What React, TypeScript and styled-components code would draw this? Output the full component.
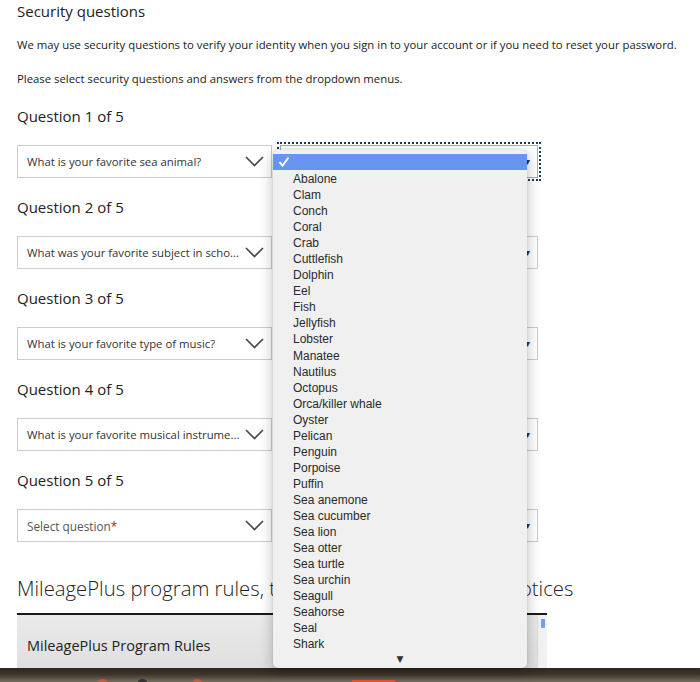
import { createGlobalStyle, styled } from 'styled-components'

const questions = [
	{ label: 'Question 1 of 5', value: 'What is your favorite sea animal?', focused: true },
	{ label: 'Question 2 of 5', value: 'What was your favorite subject in scho...' },
	{ label: 'Question 3 of 5', value: 'What is your favorite type of music?' },
	{ label: 'Question 4 of 5', value: 'What is your favorite musical instrume...' },
	{ label: 'Question 5 of 5', value: '', focused: false },
]

const animals = [
	'Abalone',
	'Clam',
	'Conch',
	'Coral',
	'Crab',
	'Cuttlefish',
	'Dolphin',
	'Eel',
	'Fish',
	'Jellyfish',
	'Lobster',
	'Manatee',
	'Nautilus',
	'Octopus',
	'Orca/killer whale',
	'Oyster',
	'Pelican',
	'Penguin',
	'Porpoise',
	'Puffin',
	'Sea anemone',
	'Sea cucumber',
	'Sea lion',
	'Sea otter',
	'Sea turtle',
	'Sea urchin',
	'Seagull',
	'Seahorse',
	'Seal',
	'Shark',
]

const Chevron = () => (
	<svg width="19" height="11" viewBox="0 0 19 11">
		<polyline points="1,1 9.5,9.5 18,1" fill="none" stroke="#4a4a4a" strokeWidth="1.7" />
	</svg>
)

const CheckMark = () => (
	<svg width="10" height="10" viewBox="0 0 10 10">
		<path d="M1 5.6 L3.6 8.6 L9 1.2" fill="none" stroke="#fff" strokeWidth="1.9" strokeLinecap="round" />
	</svg>
)

const App = () => {
	return (
		<Page>
			<GlobalStyle />
			<Content>
				<Title>Security questions</Title>
				<Text>
					We may use security questions to verify your identity when you sign in to your account or if you need
					to reset your password.
				</Text>
				<Text>Please select security questions and answers from the dropdown menus.</Text>

				{questions.map((q) => (
					<Question key={q.label}>
						<QuestionLabel>{q.label}</QuestionLabel>
						<Row>
							<Select>
								{q.value ? (
									<SelectValue>{q.value}</SelectValue>
								) : (
									<Placeholder>
										Select question<Star>*</Star>
									</Placeholder>
								)}
								<Chevron />
							</Select>
							<Answer $focused={!!q.focused}>
								<SmallArrow>▾</SmallArrow>
							</Answer>
						</Row>
					</Question>
				))}

				<RulesHeading>MileagePlus program rules, terms and conditions and notices</RulesHeading>
				<RulesFrame>
					<RulesPanel>MileagePlus Program Rules</RulesPanel>
					<Scrollbar>
						<Thumb />
					</Scrollbar>
				</RulesFrame>
			</Content>

			<Desktop>
				<Dot $color="#d8523c" $left={98} />
				<Dot $color="#333" $left={138} />
				<Dot $color="#d8523c" $left={193} />
				<OrangeBar />
			</Desktop>

			<Menu>
				<Selected>
					<CheckMark />
				</Selected>
				{animals.map((a) => (
					<Item key={a}>{a}</Item>
				))}
				<MoreArrow>▼</MoreArrow>
			</Menu>
		</Page>
	)
}

const GlobalStyle = createGlobalStyle`
	html, body {
		margin: 0;
		padding: 0;
		background: #fff;
		font-family: 'Open Sans', 'Liberation Sans', sans-serif;
		color: #222;
	}
	* {
		box-sizing: border-box;
	}
`
const Page = styled.div`
	position: relative;
	width: 700px;
	height: 682px;
	overflow: hidden;
	display: flex;
	flex-direction: column;
`
const Content = styled.div`
	flex: 1 1 auto;
	overflow: hidden;
	padding: 0 17px;
`
const Title = styled.h2`
	margin: 0;
	font-size: 15px;
	font-weight: 400;
	line-height: 22px;
	color: #222;
`
const Text = styled.p`
	margin: 14px 0 0;
	font-size: 11.35px;
	line-height: 18px;
	white-space: nowrap;
	color: #222;

	& + & {
		margin-top: 16px;
	}
`
const Question = styled.div`
	margin-top: 17px;

	& + & {
		margin-top: 18px;
	}
`
const QuestionLabel = styled.h3`
	margin: 0 0 18px;
	font-size: 15px;
	font-weight: 400;
	line-height: 22px;
	color: #222;
`
const Row = styled.div`
	display: flex;
	gap: 8px;
`
const Select = styled.div`
	width: 255px;
	height: 33px;
	border: 1px solid #ccc;
	display: flex;
	align-items: center;
	justify-content: space-between;
	padding: 0 7px 0 9px;
	font-size: 11.35px;
	color: #333;
	background: #fff;
`
const SelectValue = styled.span`
	white-space: nowrap;
	overflow: hidden;
`
const Placeholder = styled.span`
	color: #555;
	font-size: 11.8px;
`
const Star = styled.span`
	color: #b0151c;
`
const Answer = styled.div<{ $focused: boolean }>`
	width: 258px;
	height: 33px;
	border: 1px solid ${(p) => (p.$focused ? '#8fb0e6' : '#ccc')};
	outline: ${(p) => (p.$focused ? '2px dotted #1d3966' : 'none')};
	outline-offset: 1px;
	display: flex;
	align-items: center;
	justify-content: flex-end;
	padding-right: 7px;
	background: #fff;
`
const SmallArrow = styled.span`
	font-family: 'DejaVu Sans', sans-serif;
	font-size: 10px;
	color: #333;
`
const RulesHeading = styled.h2`
	margin: 31px 0 0;
	padding-bottom: 10px;
	border-bottom: 2px solid #1a1a1a;
	width: 530px;
	font-size: 20.3px;
	font-weight: 300;
	line-height: 30px;
	white-space: nowrap;
	color: #222;
`
const RulesFrame = styled.div`
	display: flex;
	width: 530px;
	height: 60px;
`
const RulesPanel = styled.div`
	flex: 1 1 auto;
	background: linear-gradient(#eaeaea, #dedede);
	padding: 21px 10px 0;
	font-size: 14.5px;
	line-height: 20px;
	color: #222;
`
const Scrollbar = styled.div`
	flex: 0 0 10px;
	background: #f1f1f1;
	border-left: 1px solid #ddd;
	padding: 4px 2px 0 3px;
`
const Thumb = styled.div`
	height: 9px;
	background: #6fa2ea;
	border-radius: 1px;
`
const Desktop = styled.div`
	flex: 0 0 14px;
	position: relative;
	background: linear-gradient(#2d271f 0%, #3e3429 45%, #75705f 100%);
`
const Dot = styled.span<{ $color: string; $left: number }>`
	position: absolute;
	bottom: -4px;
	left: ${(p) => p.$left}px;
	width: 9px;
	height: 7px;
	border-radius: 50%;
	background: ${(p) => p.$color};
`
const OrangeBar = styled.span`
	position: absolute;
	bottom: 0;
	left: 352px;
	width: 43px;
	height: 2px;
	background: #e0582d;
`
const Menu = styled.div`
	position: absolute;
	top: 150px;
	left: 273px;
	width: 254px;
	height: 518px;
	padding-top: 4px;
	background: #f0f0f0;
	border-radius: 5px;
	box-shadow: 0 3px 14px rgba(0, 0, 0, 0.28), 0 0 1px rgba(0, 0, 0, 0.25);
	font-family: 'Liberation Sans', Arial, sans-serif;
	font-size: 12px;
	color: #2a2a2a;
`
const Selected = styled.div`
	height: 16px;
	margin-bottom: 1px;
	background: #6595ee;
	display: flex;
	align-items: center;
	padding-left: 6px;
`
const Item = styled.div`
	height: 16.05px;
	line-height: 16px;
	padding-left: 20px;
	white-space: nowrap;
`
const MoreArrow = styled.div`
	margin-top: 2px;
	text-align: center;
	font-family: 'DejaVu Sans', sans-serif;
	font-size: 9px;
	color: #333;
`

export default App
